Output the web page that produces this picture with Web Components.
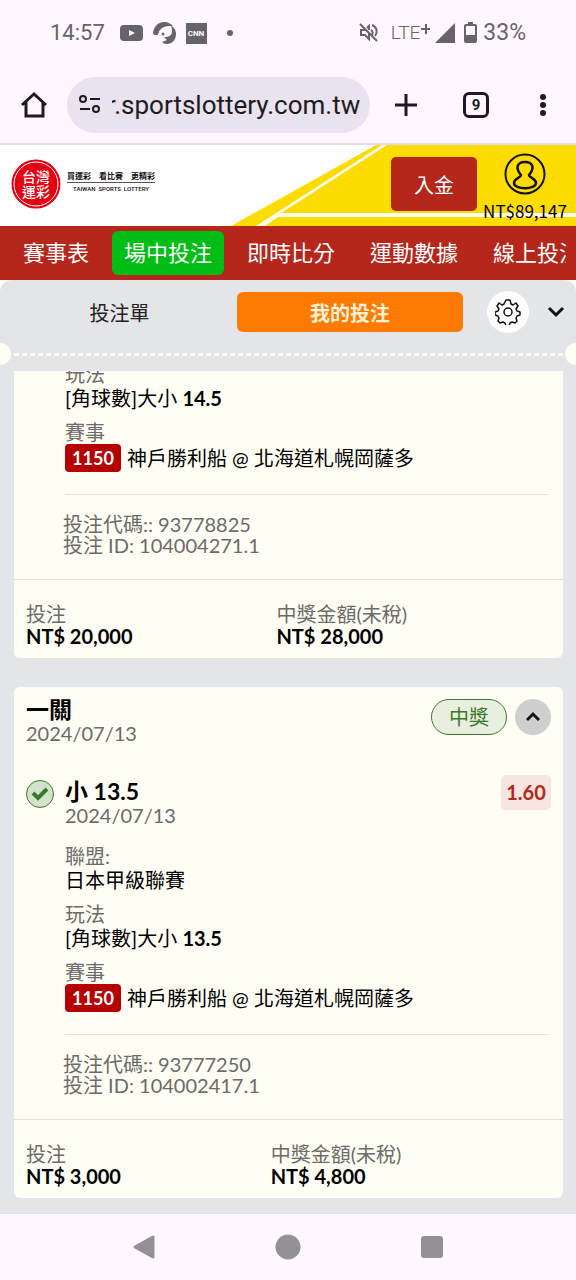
<!DOCTYPE html>
<html lang="zh-Hant">
<head>
<meta charset="utf-8">
<meta name="viewport" content="width=device-width, initial-scale=1">
<title>台灣運彩</title>
<style>
  html, body { margin: 0; }
  body {
    min-height: 100vh; display: flex; flex-direction: column;
    background: #fef7ff; color: #000;
    font-family: Lato, "Noto Sans CJK TC", sans-serif; font-size: 20px;
  }
  bet-panel { flex: 1; }
</style>
</head>
<body>
<phone-status></phone-status>
<browser-bar></browser-bar>
<site-header balance="NT$89,147"></site-header>
<site-nav>
  <a href="#schedule">賽事表</a>
  <a href="#live" class="on">場中投注</a>
  <a href="#scores">即時比分</a>
  <a href="#stats">運動數據</a>
  <a href="#online">線上投注</a>
</site-nav>
<bet-panel>
  <bet-card class="scrolled" code="93778825" ticket="104004271.1" stake="NT$ 20,000" payout="NT$ 28,000">
    <bet-field label="玩法">[角球數]大小 <b>14.5</b></bet-field>
    <bet-field label="賽事" tag="1150">神戶勝利船 @ 北海道札幌岡薩多</bet-field>
  </bet-card>
  <bet-card code="93777250" ticket="104002417.1" stake="NT$ 3,000" payout="NT$ 4,800">
    <bet-heading slot="head" date="2024/07/13" status="中獎">一關</bet-heading>
    <bet-pick slot="head" date="2024/07/13" odds="1.60">小 13.5</bet-pick>
    <bet-field label="聯盟:">日本甲級聯賽</bet-field>
    <bet-field label="玩法">[角球數]大小 <b>13.5</b></bet-field>
    <bet-field label="賽事" tag="1150">神戶勝利船 @ 北海道札幌岡薩多</bet-field>
  </bet-card>
</bet-panel>
<system-nav></system-nav>

<script>
const define = (name, render) => customElements.define(name, class extends HTMLElement {
  connectedCallback() {
    if (this.shadowRoot) return;
    const t = document.createElement('template');
    t.innerHTML = '<style>*{box-sizing:border-box}button{font:inherit;color:inherit;border:0;padding:0;background:none;display:grid;place-items:center}svg{display:block}</style>' + render(k => this.getAttribute(k) || '');
    this.attachShadow({ mode: 'open' }).append(t.content.cloneNode(true));
  }
});

define('phone-status', () => `
<style>
  :host { display: flex; justify-content: space-between; align-items: center; height: 66px; padding: 0 50px; color: #666468; font: 22px/24px Roboto, sans-serif; }
  div { display: flex; align-items: center; }
  .left { gap: 10px; }
  .time { margin-right: 5px; }
  .lte { font-size: 19px; font-weight: 300; margin-left: 12px; }
  .pct { margin-left: 6px; font-size: 23px; }
</style>
<div class="left">
  <span class="time">14:57</span>
  <svg width="23" height="16"><rect width="23" height="16" rx="4" fill="#666468"/><path d="M9 5l6 3-6 3z" fill="#fef7ff"/></svg>
  <svg width="23" height="22" viewBox="0 0 23 22" fill="#666468"><path d="M0 12C0 5 5 0 11 0c4 0 7 2 9 4l-5 0c-2 0-4 1-6 2l-3 3c0 2-1 4-2 4-1 0-3 0-4-1z"/><path d="M18 4c3 1 5 4 5 8 0 6-4 10-9 10-2 0-4-1-5-2l5-2-3-3c5 0 8-2 8-5 0-2 0-4-1-6z"/><circle cx="10" cy="12" r="1.5"/></svg>
  <svg width="21" height="21"><rect width="21" height="21" fill="#666468"/><text x="10" y="13" text-anchor="middle" font-family="Roboto" font-size="8" font-weight="700" fill="#fef7ff">CNN</text></svg>
  <svg width="27" height="8"><circle cx="13" cy="4" r="3" fill="#666468"/></svg>
</div>
<div>
  <svg width="20" height="20" viewBox="0 0 20 20" fill="none" stroke="#666468" stroke-width="2"><path d="M1 1l17 17M7 7H2v5h4l4 4V10M8 5l2-2v4M12 7c2 1 2 3 1 5M13 2c5 2 6 7 3 11"/></svg>
  <span class="lte">LTE</span>
  <svg width="37" height="22" viewBox="0 0 37 22" fill="#666468"><path d="M1 6h9v2H1zM5 2h2v10H5zM35 1v20H15z"/></svg>
  <svg width="20" height="22" viewBox="0 0 20 22"><path d="M11 0h5v2h-5z" fill="#666468"/><rect x="8" y="3" width="11" height="17" rx="1" fill="none" stroke="#666468" stroke-width="2"/><path d="M8 13h11v7H8z" fill="#666468"/></svg>
  <span class="pct">33%</span>
</div>`);

define('browser-bar', () => `
<style>
  :host { display: flex; align-items: center; height: 77px; padding: 0 18px 0 19px; border-bottom: 2px solid #e4dde8; color: #1d1b20; }
  .url { flex: 1; min-width: 0; height: 56px; margin: 0 21px 0 18px; padding: 0 9px 0 12px; border-radius: 28px; background: #e9e2ef; display: flex; align-items: center; gap: 11px; }
  input { flex: 1; min-width: 0; border: 0; padding: 0; background: none; color: inherit; font: 26px/32px Roboto, sans-serif; outline: 0; text-indent: -5px; }
  button { width: 30px; height: 40px; }
  .tabs { margin: 0 37px 0 40px; }
  .tabs span { width: 26px; height: 26px; border: 3px solid; border-radius: 6px; font: 700 15px/20px Roboto, sans-serif; }
</style>
<button aria-label="首頁"><svg width="28" height="28" viewBox="0 0 28 28" fill="none" stroke="#1d1b20" stroke-width="3"><path d="M2 14L14 3l12 11M6 11v14h17V11"/></svg></button>
<div class="url">
  <svg width="22" height="20" viewBox="0 0 22 20" fill="none" stroke="#1d1b20" stroke-width="2"><circle cx="4" cy="4" r="3"/><circle cx="17" cy="14" r="3"/><path d="M11 4h10M1 14h10"/></svg>
  <input aria-label="網址" value="r.sportslottery.com.tw">
</div>
<button aria-label="新分頁"><svg width="24" height="24"><path d="M12 1v22M1 12h22" stroke="#1d1b20" stroke-width="3"/></svg></button>
<button class="tabs" aria-label="分頁"><span>9</span></button>
<button aria-label="選單"><svg width="8" height="24" fill="#1d1b20"><circle cx="4" cy="4" r="3"/><circle cx="4" cy="12" r="3"/><circle cx="4" cy="20" r="3"/></svg></button>`);

define('site-header', a => `
<style>
  :host { display: flex; align-items: flex-start; position: relative; height: 81px; padding: 0 9px 0 11px; background: #fff; }
  .bg { position: absolute; inset: 0; width: 100%; height: 100%; }
  .logo, .pay, .me { position: relative; }
  .logo { display: flex; gap: 6px; align-items: center; margin: 14px auto 0 0; color: #111; text-decoration: none; }
  .tag { display: flex; flex-direction: column; font: 700 8px/12px "Noto Sans CJK TC", sans-serif; text-align: center; margin-top: -4px; }
  .tag span + span { border-top: 1px solid #555; font: 500 6px/12px Roboto, sans-serif; }
  .pay { width: 86px; height: 54px; margin: 12px 6px 0 0; border-radius: 5px; background: #b5261b; color: #fff; }
  .me { display: flex; flex-direction: column; align-items: center; padding-top: 8px; font: 17px/18px "Noto Sans CJK TC", sans-serif; width: 84px; }
  .me span { margin-top: 7px; }
</style>
<svg class="bg" viewBox="0 0 576 81" preserveAspectRatio="xMaxYMid slice" aria-hidden="true">
  <path d="M376 0H576V81H231z" fill="#ffdc00"/>
  <path d="M382 0h5L281 68H576v4H278L265 81H256z" fill="#fffef0"/>
</svg>
<a class="logo" href="#home">
  <svg width="50" height="50" viewBox="0 0 50 50" font-family="'Noto Sans CJK TC', sans-serif" font-size="14" font-weight="500" fill="#fff" text-anchor="middle"><circle cx="25" cy="25" r="24.5" fill="#e60013"/><circle cx="25" cy="25" r="22" fill="none" stroke="#fff"/><text x="25" y="23">台灣</text><text x="25" y="38">運彩</text></svg>
  <span class="tag"><span>買運彩　看比賽　更精彩</span><span>TAIWAN&nbsp; SPORTS&nbsp; LOTTERY</span></span>
</a>
<button class="pay">入金</button>
<div class="me">
  <svg width="42" height="42" viewBox="0 0 42 42" fill="none" stroke="#111" stroke-width="2"><circle cx="21" cy="21" r="19.5"/><path stroke-width="2.5" d="M17 22c-6-7-4-13 4-13s10 6 4 13c0 3 7 3 7 8 0 7-22 7-22 0 0-5 7-5 7-8z"/></svg>
  <span>${a('balance')}</span>
</div>`);

define('site-nav', () => `
<style>
  :host { display: block; padding: 5px 10px 5px 11px; background: #b5261b; }
  nav { display: flex; gap: 11px; overflow: hidden; }
  ::slotted(a) { flex: none; padding: 0 12px; border-radius: 6px; color: #fff; text-decoration: none; font-size: 22px; line-height: 44px; }
  ::slotted(a.on) { background: #00be15; }
</style>
<nav><slot></slot></nav>`);

define('bet-panel', () => `
<style>
  :host { display: block; background: #fffef5; }
  .panel { background: #e3e5e8; border-radius: 12px 12px 0 0; padding-bottom: 16px; min-height: 100%; }
  .tabs { display: flex; align-items: center; height: 63px; padding: 1px 4px 0 2px; }
  .tab { flex: 1; height: 40px; border-radius: 6px; color: #222; }
  .tab.on { flex: 0 1 226px; background: #ff7a00; color: #fff0d8; font-weight: 700; }
  .gear { width: 42px; height: 42px; border-radius: 50%; background: #fff; margin: 0 11px 0 24px; }
  .fold { width: 32px; height: 42px; }
  .cut { display: flex; align-items: center; height: 22px; overflow: hidden; }
  .cut::before, .cut::after { content: ""; flex: none; width: 22px; height: 22px; border-radius: 50%; background: #fffef5; margin: 0 0 0 -11px; }
  .cut::after { margin: 0 -11px 0 0; }
  .cut i { flex: 1; height: 3px; background: repeating-linear-gradient(90deg, #e3e5e8 0 3px, #fffef5 3px 8px); }
  .list { display: flex; flex-direction: column; gap: 29px; margin: 6px 13px 0 14px; overflow: hidden; }
  ::slotted(.scrolled) { margin-top: -9px; }
</style>
<div class="panel">
  <div class="tabs">
    <button class="tab">投注單</button>
    <button class="tab on">我的投注</button>
    <button class="gear" aria-label="設定"><svg width="26" height="26" viewBox="0 0 26 26" fill="none" stroke="#111" stroke-width="1.5"><circle cx="13" cy="13" r="4"/><path d="M11 1h4l1 4 2 1 3-2 2 3-2 3 1 2 3 1v3l-3 1-1 2 1 3-2 2-3-1-2 1-1 3h-3l-1-3-2-1-3 1-2-2 1-3-1-2-3-1v-3l3-1 1-2-2-3 2-3 3 2 2-1z" stroke-linejoin="round"/></svg></button>
    <button class="fold" aria-label="收合"><svg width="18" height="12" fill="none" stroke="#111" stroke-width="3"><path d="M2 2l7 7 7-7"/></svg></button>
  </div>
  <div class="cut"><i></i></div>
  <div class="list"><slot></slot></div>
</div>`);

define('bet-card', a => `
<style>
  :host { display: block; background: #fffef5; border-radius: 6px; }
  .fields { display: flex; flex-direction: column; gap: 10px; margin: 0 15px 0 51px; padding-bottom: 22px; border-bottom: 1px solid #e2e0da; }
  .ids { margin: 0; padding: 19px 13px 23px 49px; line-height: 21px; color: #6b6b68; }
  .sum { display: flex; margin: 0; padding: 23px 12px 11px; border-top: 1px solid #e2e0da; line-height: 22px; }
  .sum div { flex: 1 1 auto; }
  dt { color: #6b6b68; }
  dd { margin: 0; font-weight: 700; }
</style>
<slot name="head"></slot>
<div class="fields"><slot></slot></div>
<p class="ids">投注代碼:: ${a('code')}<br>投注 ID: ${a('ticket')}</p>
<dl class="sum"><div><dt>投注</dt><dd>${a('stake')}</dd></div><div><dt>中獎金額(未稅)</dt><dd>${a('payout')}</dd></div></dl>`);

define('bet-heading', a => `
<style>
  :host { display: flex; gap: 8px; padding: 10px 12px 34px; line-height: 24px; }
  .t { flex: 1; }
  h2 { margin: 0; font-size: 23px; line-height: 24px; font-weight: 700; }
  time { display: block; color: #6b6b68; }
  .won { width: 76px; height: 36px; margin-top: 2px; border: 1px solid #39792c; border-radius: 18px; background: #e9efdf; color: #39792c; text-align: center; line-height: 34px; }
  button { width: 36px; height: 36px; margin-top: 2px; border-radius: 50%; background: #cfcfd0; }
</style>
<div class="t"><h2><slot></slot></h2><time>${a('date')}</time></div>
<span class="won">${a('status')}</span>
<button aria-label="收合"><svg width="14" height="12" fill="none" stroke="#111" stroke-width="3"><path d="M1 9l6-6 6 6"/></svg></button>`);

define('bet-pick', a => `
<style>
  :host { display: flex; align-items: flex-start; padding: 0 12px 17px; line-height: 24px; }
  .t { flex: 1; margin-left: 11px; }
  .t b { display: block; font-size: 23px; }
  time { display: block; color: #6b6b68; }
  .odds { width: 50px; margin-top: -4px; border-radius: 5px; background: #f7e5df; color: #b5261b; font-weight: 700; text-align: center; line-height: 35px; }
</style>
<svg width="28" height="30" viewBox="0 0 28 30" fill="none" stroke="#39792c"><circle cx="14" cy="15" r="13.5" fill="#d5e2cb"/><path d="M7 14l5 5 9-9" stroke-width="4"/></svg>
<div class="t"><b><slot></slot></b><time>${a('date')}</time></div>
<span class="odds">${a('odds')}</span>`);

define('bet-field', a => `
<style>
  :host { display: block; line-height: 24px; }
  .l { color: #6b6b68; }
  .v { display: flex; align-items: center; gap: 6px; }
  .tag { flex: none; width: 56px; border-radius: 4px; background: #b70000; color: #fff; font-weight: 700; font-size: 18px; text-align: center; line-height: 28px; }
</style>
<div class="l">${a('label')}</div>
<div class="v">${a('tag') && `<span class="tag">${a('tag')}</span>`}<span><slot></slot></span></div>`);

define('system-nav', () => `
<style>
  :host { display: flex; height: 66px; padding: 0 72px; background: #fef7ff; }
  button { flex: 1; }
</style>
<button aria-label="返回"><svg width="24" height="26" viewBox="0 0 24 26"><path d="M3 13L21 3v20z" fill="#949195" stroke="#949195" stroke-width="3" stroke-linejoin="round"/></svg></button>
<button aria-label="主畫面"><svg width="26" height="26"><circle cx="13" cy="13" r="12.5" fill="#949195"/></svg></button>
<button aria-label="最近"><svg width="22" height="22"><rect width="22" height="22" rx="3" fill="#949195"/></svg></button>`);
</script>
</body>
</html>
